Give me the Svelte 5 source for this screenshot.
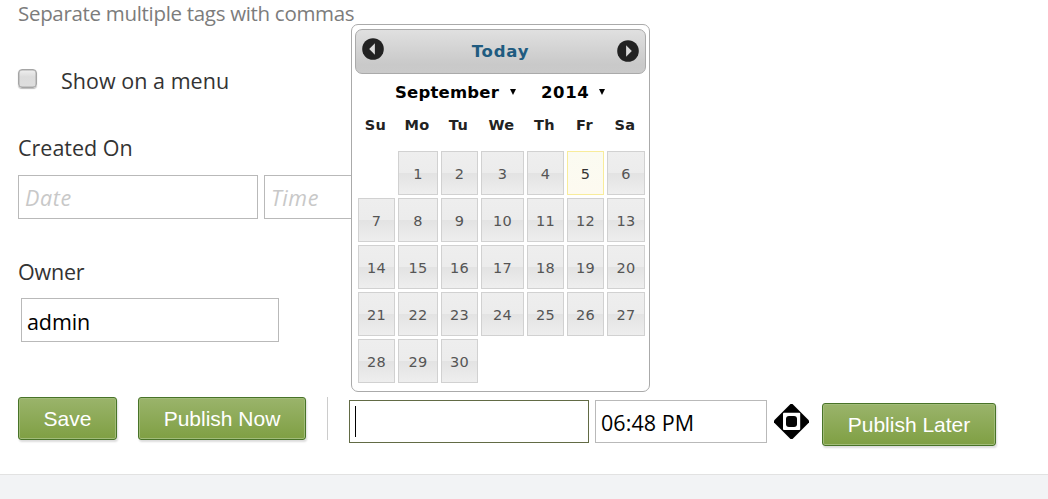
<script>
  const days = ['Su', 'Mo', 'Tu', 'We', 'Th', 'Fr', 'Sa'];
  const cells = [null, ...Array.from({ length: 30 }, (_, i) => i + 1)];
</script>

<main>
  <form onsubmit={(e) => e.preventDefault()}>
    <p class="hint">Separate multiple tags with commas</p>

    <div class="menu-row">
      <span class="checkbox" role="checkbox" aria-checked="false" tabindex="-1"></span>
      <span class="label menu-label">Show on a menu</span>
    </div>

    <div class="label created">Created On</div>
    <div class="row">
      <div class="field date placeholder"><span>Date</span></div>
      <div class="field time placeholder"><span>Time</span></div>
    </div>

    <div class="label owner">Owner</div>
    <div class="field owner-field"><span class="admin">admin</span></div>

    <div class="actions">
      <button class="save"><span>Save</span></button>
      <button class="now"><span>Publish Now</span></button>
      <i class="divider"></i>
      <div class="field pub-date"><i class="caret"></i></div>
      <div class="field pub-time"><span class="clock">06:48 PM</span></div>
      <svg class="spinner" width="35" height="35" viewBox="0 0 35 35">
        <path d="M16.5 0h2L35 16.5v2L18.5 35h-2L0 18.5v-2Z" fill="#000" />
        <rect x="9" y="8.8" width="17.2" height="17.2" rx="1" fill="#fff" />
        <rect x="12" y="12" width="11" height="11" rx="3" fill="#050505" />
      </svg>
      <button class="later"><span>Publish Later</span></button>
    </div>
  </form>

  <section class="calendar">
    <header>
      <svg class="prev" width="22" height="22" viewBox="0 0 22 22">
        <circle cx="11" cy="11" r="10.8" fill="#222" />
        <path d="M12.9 5.2v11.6L7.2 11Z" fill="#dadada" />
      </svg>
      <b>Today</b>
      <svg class="next" width="22" height="22" viewBox="0 0 22 22">
        <circle cx="11" cy="11" r="10.8" fill="#222" />
        <path d="M9.1 5.2v11.6l5.7-5.8Z" fill="#dadada" />
      </svg>
    </header>
    <div class="selects">
      <span class="month">September</span>
      <svg width="6" height="6" viewBox="0 0 6 6"><path d="M0 0h6L3 6Z" /></svg>
      <span class="year">2014</span>
      <svg width="6" height="6" viewBox="0 0 6 6"><path d="M0 0h6L3 6Z" /></svg>
    </div>
    <div class="grid weekdays">
      {#each days as d}<span>{d}</span>{/each}
    </div>
    <div class="grid days">
      {#each cells as c}
        {#if c === null}<span></span>{:else}<span class="day" class:today={c === 5}>{c}</span>{/if}
      {/each}
    </div>
  </section>
</main>
<footer></footer>

<style>
  :global(body) { background: #fff; overflow: hidden; }
  main { position: relative; height: 474px; font-family: 'Open Sans', 'Noto Sans', sans-serif; }
  footer { height: 24px; border-top: 1px solid #e2e2e2; background: #f2f3f5; }
  form { display: flex; flex-direction: column; padding-left: 18px; white-space: nowrap; }
  .hint { margin: 0; height: 28px; line-height: 26px; font-size: 20.5px; letter-spacing: -.31px; color: #7c7c7c; }
  .menu-row { display: flex; height: 30px; margin-top: 38px; }
  .checkbox {
    box-sizing: border-box; width: 19px; height: 19px; margin: 3px 24px 0 0;
    border: 1px solid #a5a5a5; border-radius: 4px;
    background: linear-gradient(#efefef, #dcdcdc 40%, #dedede);
    box-shadow: 0 1px 1px #bbb, inset 0 0 0 .5px #aaa;
  }
  .label { height: 30px; line-height: 30px; font-size: 21.5px; color: #333; }
  .menu-label { letter-spacing: .03px; }
  .created { margin-top: 37px; letter-spacing: 0; }
  .row { display: flex; gap: 6px; margin-top: 12px; }
  .field { box-sizing: border-box; height: 44px; border: 1px solid #b9b9b9; background: #fff; padding-left: 6px; font-size: 21.5px; line-height: 44px; color: #000; }
  .date { width: 240px; }
  .time { width: 172px; }
  .placeholder { color: #c8c8c8; font-style: italic; letter-spacing: .6px; }
  .owner { margin-top: 38px; letter-spacing: -.2px; }
  .owner-field { width: 258px; margin: 11px 0 0 3px; padding-left: 5px; line-height: 45px; }
  .admin { letter-spacing: -.1px; }
  .actions { display: flex; align-items: flex-start; margin-top: 55px; }
  button {
    box-sizing: border-box; height: 43px; padding: 0; border: 1px solid #487328; border-radius: 3px;
    background: linear-gradient(#9ab46b, #7f9f43); color: #fff;
    font: 21px/41px 'Liberation Sans', Arial, sans-serif;
    box-shadow: inset 0 0 0 1px #a2bc79, 1px 2px 2px #ddd;
  }
  .save { width: 99px; margin-right: 21px; }
  .now { width: 168px; margin-right: 21px; }
  .divider { width: 1px; height: 43px; margin-right: 21px; background: #ccc; }
  .actions .field { height: 43px; margin-top: 3px; }
  .pub-date { width: 240px; margin-right: 6px; border-color: #626b45; padding: 5px; }
  .caret { display: block; width: 1px; height: 31px; background: #000; }
  .pub-time { width: 172px; margin-right: 7px; padding-left: 5px; }
  .clock { letter-spacing: .05px; }
  .spinner { margin: 7px 13px 0 0; }
  .later { width: 174px; margin-top: 6px; }

  .calendar {
    position: absolute; left: 351px; top: 24px; box-sizing: border-box; width: 299px; height: 368px;
    padding: 4px 3px; border: 1px solid #aaa; border-radius: 7px; background: #fff;
    font-family: 'DejaVu Sans', Verdana, sans-serif;
  }
  header {
    display: flex; justify-content: space-between; box-sizing: border-box; height: 45px; padding: 0 6px;
    border: 1px solid #aaa; border-radius: 7px; background: linear-gradient(#e0e0e0, #c9c9c9 80%, #cacaca);
  }
  header b { line-height: 43px; font-size: 16.5px; letter-spacing: .8px; color: #205b80; }
  .prev { margin-top: 8px; }
  .next { margin-top: 10px; }
  .selects { display: flex; align-items: center; height: 22px; margin-top: 7px; padding-left: 40px; font-size: 16.5px; letter-spacing: .2px; font-weight: bold; color: #000; }
  .month { width: 115px; }
  .year { width: 58px; margin-left: 25px; letter-spacing: .6px; }
  .grid { display: grid; grid-template-columns: 37px 40px 37px 43px 37px 37px 38px; gap: 3px; padding-left: 3px; text-align: center; }
  .weekdays { height: 20px; margin: 12px 0 0 -1px; line-height: 20px; font-size: 14.5px; letter-spacing: .4px; font-weight: bold; color: #222; }
  .days { margin-top: 16px; }
  .day {
    box-sizing: border-box; height: 44px; border: 1px solid #d1d1d1; line-height: 44px; font-size: 14.5px; letter-spacing: .3px; color: #555;
    background: linear-gradient(#eee, #ececec 49%, #e3e3e3 51%, #eee);
  }
  .today { border-color: #f8ec9b; color: #333; background: linear-gradient(#fbfbf1, #fdfaf0); }
</style>
